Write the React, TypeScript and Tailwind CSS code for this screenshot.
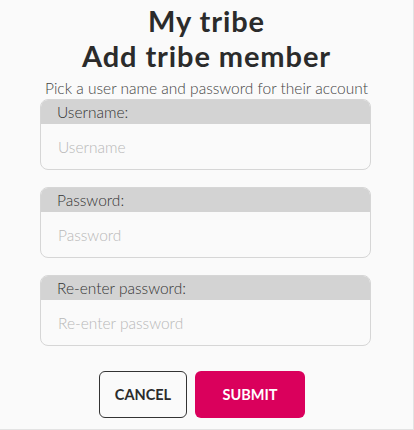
import React from "react";

const FIELDS = [
  { label: "Username:", placeholder: "Username", type: "text" },
  { label: "Password:", placeholder: "Password", type: "password" },
  { label: "Re-enter password:", placeholder: "Re-enter password", type: "password" },
];

export default function App() {
  return (
    <main
      className="h-[430px] w-[414px] border-r border-b border-[#e3e3e3] bg-[#fafafa] text-[#2b2b2b]"
      style={{ fontFamily: "Lato, 'Open Sans', sans-serif" }}
    >
      <h1 className="pt-[3px] text-center text-[29px] font-bold leading-[35px] tracking-[0.9px]">
        My tribe
        <br />
        Add tribe member
      </h1>
      <p className="mt-[6px] text-center text-[15.5px] font-light leading-[18px] text-[#444]">
        Pick a user name and password for their account
      </p>

      <div className="mt-[2px] flex flex-col gap-[17px] px-[40px] pr-[42px]">
        {FIELDS.map((f) => (
          <div key={f.label} className="overflow-hidden rounded-[8px] border border-[#d6d6d6] bg-[#fafafa]">
            <div className="h-[24px] bg-[#d3d3d3] pl-[16px] text-[15.5px] font-light leading-[24px] text-[#333]">
              {f.label}
            </div>
            <input
              type={f.type}
              placeholder={f.placeholder}
              className="h-[45px] w-full bg-transparent pl-[17px] text-[15.5px] font-light outline-none placeholder:text-[#b8b8b8]"
            />
          </div>
        ))}
      </div>

      <div className="mt-[25px] flex justify-center gap-[8px] pr-[9px]">
        <button className="h-[47px] w-[88px] rounded-[6px] border border-[#333] bg-transparent text-[14.5px] font-bold text-[#2b2b2b]">
          CANCEL
        </button>
        <button className="h-[47px] w-[110px] rounded-[6px] bg-[#da005c] text-[14.5px] font-bold text-white">
          SUBMIT
        </button>
      </div>
    </main>
  );
}
